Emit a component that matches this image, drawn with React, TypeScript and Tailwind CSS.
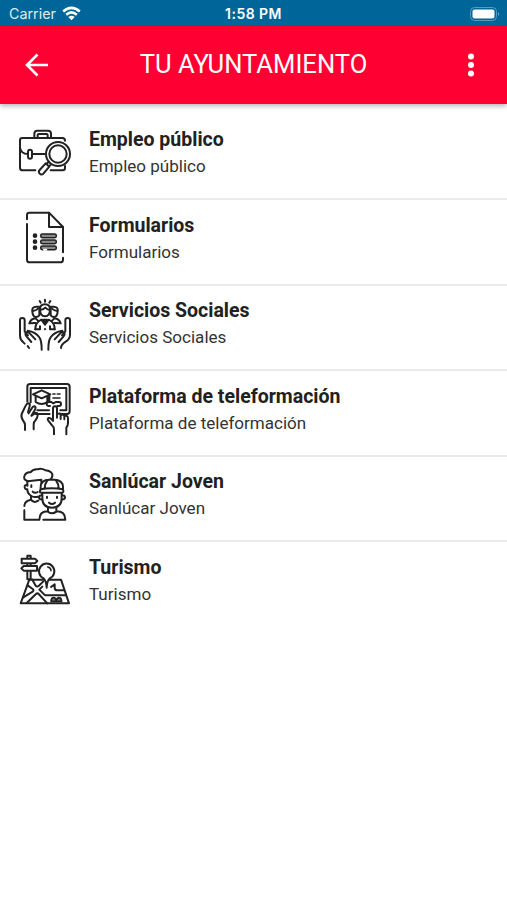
import { ReactNode } from "react";

type MenuItem = {
    title: string;
    subtitle: string;
    icon: ReactNode;
}

const BriefcaseIcon = () => (
    <>
        <path d="M30 126V61q0-7 7-7H157q8 0 8 8M30 126v17q0 8 8 8H76M165 138v6q0 7-7 7H122" />
        <path d="M73 53V41q0-9 9-9h32q9 0 9 9V53M83 53V45q0-3 3-3h24q3 0 3 3v8" />
        <path d="M30 84q4 18 23 18M67 102h37" />
        <rect x="54" y="89" width="12" height="27" rx="6" />
        <circle cx="144" cy="102" r="36" fill="white" />
        <circle cx="144" cy="102" r="26" />
        <path d="M116 125l-6 7M123 133l-6 6" />
        <path d="M107 130l11 10-18 21q-6 5-11 0t0-11z" fill="white" />
    </>
);

const FormIcon = () => (
    <>
        <path d="M51 43V30q0-7 7-7h59l42 43v76M51 57V164q0 8 8 8h92q8 0 8-8v-6" />
        <path d="M117 23V66h42" />
        <g fill="#8a8a8a" strokeWidth="4.5">
            <rect x="92" y="87" width="47" height="11" rx="5" />
            <rect x="92" y="105" width="47" height="11" rx="5" />
            <rect x="92" y="123" width="47" height="11" rx="5" />
        </g>
        <g fill="#222">
            <circle cx="75" cy="92" r="4" />
            <circle cx="75" cy="110" r="4" />
            <circle cx="75" cy="128" r="4" />
        </g>
        <path d="M102 134h7" stroke="white" />
    </>
);

const SocialIcon = () => (
    <>
        <path d="M105 26v6M89 30l3 5M121 30l-3 5" />
        <path d="M57 171l-4-6M44 158l-4-4q-10-8-10-20V88q0-7 7-7t7 7v33l10 12" />
        <path d="M76 145L60 128q-7-8-12-3-4 5 2 12l14 16M53 119q25 4 35 20 7 9 7 37" />
        <path d="M153 171q0-10 14-19 13-8 13-21V88q0-7-7-7t-7 7v33l-10 12" />
        <path d="M134 145l16-17q7-8 12-3 4 5-2 12l-14 16M157 119q-25 4-35 20-7 9-7 37" />
        <path d="M76 96l-18 1q5-14 19-15l12 12M134 96l18 1q-5-14-19-15l-12 12" />
        <path d="M67 61q-2-14 12-14h9v26q-5 6-12 5-8-2-9-17zM143 61q2-14-12-14h-9v26q5 6 12 5 8-2 9-17z" fill="white" />
        <path d="M68 60q10-1 16-7M142 60q-10-1-16-7" />
        <path d="M90 55q0-15 15-15t15 15q0 21-15 21T90 55z" fill="white" />
        <path d="M91 57q10-1 15-7 6 6 13 7" />
        <path d="M76 115q-1-20 18-29l11 15 11-15q19 9 18 29" fill="white" />
        <path d="M76 115h14v-9M134 115h-14v-9M105 114v1" />
        <path d="M99 86h12l-6 13z" fill="#222" />
    </>
);

const TrainingIcon = () => (
    <>
        <path d="M52 77V32q0-8 8-8H171q8 0 8 8v73q0 9-8 9H151M119 114H77" />
        <path d="M62 79V36h107v67h-18M117 103H82" />
        <path d="M69 55l26-12 26 12-26 12zM77 61v17q18 12 35 0V60M118 57v18" />
        <path d="M129 54h6M142 54h8M129 66h21" strokeWidth="5" />
        <path d="M120 90h-5q-5-1-5-6t6-6h8l6 4 7-4h10q6 0 6 6t-6 6h-4" />
        <path d="M45 162v-15q0-6-5-12-8-11-5-21l12-25q3-7 9-7 5 1 3 8l-5 19" />
        <path d="M71 160v-15q0-7 6-13 6-7 6-15 0-7-6-7l-10 8M64 119l10-16q6-10-1-12-5 0-9 8l-8 13" />
        <path d="M132 175v-14q0-8-6-13l-11-14q-4-6 1-8 5-1 9 4l4 5V98q0-7 6-7t6 7v27M141 114q11-4 11 3v12M152 117q11-3 11 4v9M163 120q11-3 11 7v14q0 8-5 14v20" />
    </>
);

const YouthIcon = () => (
    <>
        <path d="M52 71V57q-14-5-8-17 5-11 18-9 6-10 20-9 12-4 25 3 22 3 20 17-1 8-8 12" />
        <path d="M52 58l42-5v9M52 70q-9-3-8 5t8 7q0 13 12 20 9 5 20 2M64 70v5M68 89q7 6 15 1" />
        <path d="M63 102v11q-20 4-20 19M43 145v28h42M63 113q8 12 22 3" />
        <path d="M92 83V76q0-23 26-23h14q27 0 27 23v7q4 9-5 9H94q-8-1-2-9z" fill="white" />
        <path d="M92 82q33-6 67 0M112 55q-8 11-8 24M138 55q8 11 8 24" />
        <path d="M97 93v16q0 28 29 28t29-28V93M97 101q-10-2-10 5t10 7M155 101q10-2 10 5t-10 7" />
        <path d="M111 104v4M141 104v4M117 122q9 8 18 0" />
        <path d="M114 136v12q-26 0-26 25M139 136v12q27 0 27 25M114 149q12 10 25 0M100 173h66" />
    </>
);

const TourismIcon = () => (
    <>
        <path d="M52 35v-9h10v9M52 49v8M62 49v8M52 71v26h10V71" />
        <path d="M35 35h40l7 7-7 7H35zM41 57h40v14H41l-7-7z" fill="white" />
        <path d="M70 98H58L32 169H177L153 98H70" />
        <path d="M110 122Q109 102 101 94a23 23 0 1 1 18 0Q111 102 110 122z" fill="white" />
        <path d="M113 60q10 2 10 11" strokeWidth="4.5" />
        <path d="M53 115l15 11q5 4 0 8l-28 17M67 98l10 18q4 5 9 1l14-14" />
        <path d="M50 168l28-27q4-4 8 0l26 28" />
        <path d="M88 128l15 15q3 2 7 2h57M88 128l9-9M123 120l11-8v10q0 8 8 8h19" />
        <path d="M123 163q1-11 8-11 6 0 8 10 2-10 8-10 7 0 8 11z" fill="#777" strokeWidth="5" />
    </>
);

const items: MenuItem[] = [
    { title: "Empleo público", subtitle: "Empleo público", icon: <BriefcaseIcon /> },
    { title: "Formularios", subtitle: "Formularios", icon: <FormIcon /> },
    { title: "Servicios Sociales", subtitle: "Servicios Sociales", icon: <SocialIcon /> },
    { title: "Plataforma de teleformación", subtitle: "Plataforma de teleformación", icon: <TrainingIcon /> },
    { title: "Sanlúcar Joven", subtitle: "Sanlúcar Joven", icon: <YouthIcon /> },
    { title: "Turismo", subtitle: "Turismo", icon: <TourismIcon /> },
];

const StatusBar = () => (
    <div className="grid h-[25.5px] grid-cols-3 items-center bg-[#006699] pt-[2px] pr-[7px] pl-[9px] font-['Inter',sans-serif] text-[14px] text-white">
        <div className="flex items-center gap-[6px]">
            <span className="text-[14.3px] text-[#dcebf3]">Carrier</span>
            <svg width="19" height="15" viewBox="0 0 19 15" fill="none" stroke="white" strokeWidth="2.6">
                <path d="M1.2 5.5q8.3-7.4 16.6 0M4.2 8.7q5.3-4.6 10.6 0" />
                <path d="M6.3 11q3.2-2.6 6.4 0L9.5 14.2z" fill="white" stroke="none" />
            </svg>
        </div>
        <span className="pr-[2px] text-center text-[14px] font-semibold tracking-[0.45px] whitespace-nowrap">1:58 PM</span>
        <svg className="justify-self-end" width="30" height="14" viewBox="0 0 30 14">
            <rect x=".5" y=".5" width="26" height="13" rx="4" fill="none" stroke="#5b9bbd" />
            <rect x="2.5" y="2.5" width="22" height="9" rx="2" fill="white" />
            <path d="M28 5q2 2 0 4z" fill="#79aeca" />
        </svg>
    </div>
);

const Header = () => (
    <header className="grid h-[78px] grid-cols-[1fr_auto_1fr] items-center bg-[#ff0033] pr-[32px] pl-[25px] text-white shadow-[0_2px_5px_rgba(0,0,0,0.3)]">
        <svg width="24" height="24" viewBox="0 0 24 24" fill="none" stroke="white" strokeWidth="2.6">
            <path d="M23 12H2.5M12.5 1.5L2 12l10.5 10.5" />
        </svg>
        <h1 className="pl-[7px] text-[25.6px] leading-none font-normal">TU AYUNTAMIENTO</h1>
        <svg className="justify-self-end" width="8" height="24" viewBox="0 0 8 24" fill="white">
            <circle cx="4" cy="3.5" r="3" />
            <circle cx="4" cy="12" r="3" />
            <circle cx="4" cy="20.5" r="3" />
        </svg>
    </header>
);

export default function App() {
    return (
        <div className="min-h-[900px] w-full bg-white font-['Roboto',sans-serif] text-[#212121]">
            <StatusBar />
            <Header />
            <ul className="pt-[11px]">
                {items.map((item) => (
                    <li key={item.title} className="flex h-[85.5px] border-b-2 border-[#ebebeb] pt-[5px] pl-[10px] last:border-b-0">
                        <svg width="70" height="65" viewBox="0 0 210 195" fill="none" stroke="#222" strokeWidth="6" strokeLinecap="round" strokeLinejoin="round">
                            {item.icon}
                        </svg>
                        <div className="flex flex-col pt-[6.5px] pl-[9px]">
                            <span className="text-[19.5px] leading-[27px] font-bold">{item.title}</span>
                            <span className="text-[17.05px] leading-[26px] text-[#333]">{item.subtitle}</span>
                        </div>
                    </li>
                ))}
            </ul>
        </div>
    );
}
